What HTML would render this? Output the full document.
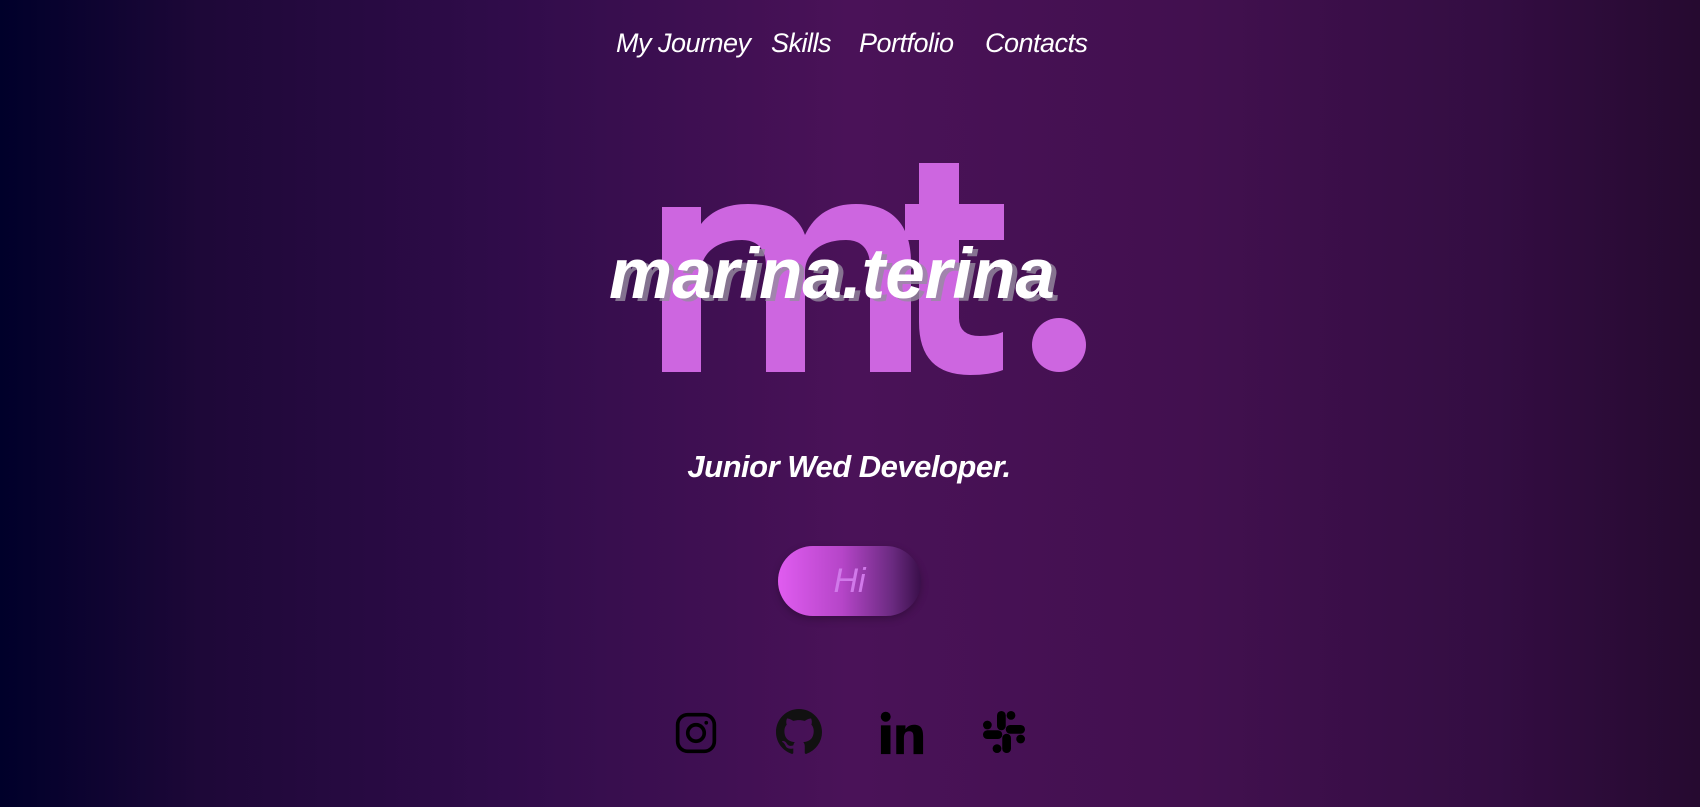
<!DOCTYPE html>
<html><head><meta charset="utf-8"><style>
html,body{margin:0;padding:0}
body{width:1700px;height:807px;overflow:hidden;position:relative;
background:linear-gradient(90deg,#00002a 0%,#1e0838 12%,#300c4a 30%,#4a1258 50%,#42104f 70%,#330d42 88%,#260a30 100%);
font-family:"Liberation Sans",sans-serif;color:#fff}
nav{position:absolute;top:28px;left:0;width:1700px;font-size:27px;font-style:italic;letter-spacing:-0.5px}
nav span{position:absolute;top:0;white-space:nowrap}
.name{position:absolute;left:609px;top:234px;font-size:71px;font-weight:bold;font-style:italic;color:#fff;text-shadow:5px 3px 0 rgba(150,140,160,.8);letter-spacing:0px;white-space:nowrap}
.sub{position:absolute;left:649px;top:449px;width:400px;text-align:center;font-size:31px;font-weight:bold;font-style:italic;letter-spacing:-0.5px;white-space:nowrap}
.btn{position:absolute;left:778px;top:546px;width:143px;height:70px;border-radius:35px;background:linear-gradient(90deg,#e05cf0 0%,#b545c8 45%,#6a2a80 80%,#3a0f4a 100%);box-shadow:0 3px 8px rgba(0,0,0,.25);text-align:center;line-height:70px;font-size:34px;font-style:italic;color:#d179ea}
svg.ic{position:absolute;top:711px}
</style></head><body>
<nav>
<span style="left:616px">My Journey</span>
<span style="left:771px">Skills</span>
<span style="left:859px">Portfolio</span>
<span style="left:985px">Contacts</span>
</nav>
<svg style="position:absolute;left:0;top:0" width="1700" height="807">
<g fill="#cd66e0">
<path d="M662,372 V207 H701 V224 C712,210 728,204 748,204 C785,204 800,220 805,235 C815,214 832,204 856,204 C895,204 911,228 911,262 V372 H870 V266 C870,250 862,240 846,240 C820,240 805,254 805,272 V372 H766 V266 C766,250 758,240 742,240 C716,240 701,254 701,272 V372 Z"/>
<path d="M919,163 H959 V204 H1004 V240 H959 V318 Q959,336 980,336 Q994,336 1003,332 V370 Q990,375 970,375 Q919,375 919,322 V240 H905 V204 H919 Z"/>
<circle cx="1059" cy="345" r="27"/>
</g>
</svg>
<div class="name">marina.terina</div>
<div class="sub">Junior Wed Developer.</div>
<div class="btn">Hi</div>
<svg class="ic" style="left:674px" width="44" height="44" viewBox="0 0 24 24" fill="none" stroke="#000" stroke-width="2"><rect x="2" y="2" width="20" height="20" rx="5.5"/><circle cx="12" cy="12" r="4.5"/><circle cx="17.6" cy="6.4" r="1" fill="#000" stroke="none"/></svg>
<svg class="ic" style="left:776px;top:709px" width="46" height="46" viewBox="0 0 16 16"><path fill="#111" d="M8 0C3.58 0 0 3.580 0 8c0 3.54 2.29 6.53 5.47 7.59.4.07.55-.17.55-.38 0-.19-.01-.82-.01-1.49-2.01.37-2.53-.49-2.69-.94-.09-.23-.48-.94-.82-1.130-.28-.15-.68-.52-.01-.53.63-.01 1.08.58 1.23.82.72 1.21 1.87.87 2.33.66.07-.52.28-.87.51-1.07-1.78-.2-3.64-.89-3.64-3.95 0-.87.31-1.59.82-2.15-.08-.2-.36-1.02.08-2.12 0 0 .67-.21 2.2.82.64-.18 1.32-.27 2-.27.68 0 1.36.09 2 .27 1.53-1.04 2.2-.82 2.2-.82.44 1.1.16 1.92.08 2.12.51.56.82 1.27.82 2.15 0 3.07-1.87 3.75-3.65 3.95.29.25.54.73.54 1.48 0 1.07-.01 1.93-.01 2.2 0 .21.15.46.55.38A8.013 8.013 0 0016 8c0-4.42-3.58-8-8-8z"/></svg>
<svg class="ic" style="left:879px;top:710px" width="46" height="46" viewBox="0 0 24 24" fill="#000"><circle cx="3.5" cy="3.5" r="2.6"/><rect x="1" y="8" width="5" height="15"/><path d="M9 8h4.8v2.1C14.5 8.9 16 7.7 18.3 7.7 22.2 7.7 23 10.3 23 13.6V23h-5v-8.4c0-2-.1-3.5-2.2-3.5-2.1 0-2.8 1.4-2.8 3.5V23H9z"/></svg>
<svg class="ic" style="left:983px" width="42" height="42" viewBox="0 0 24 24" fill="#000">
<rect x="8" y="0" width="5" height="11" rx="2.5"/><rect x="13.5" y="0" width="5" height="5" rx="2.5"/>
<rect x="13" y="8" width="11" height="5" rx="2.5"/><rect x="19" y="13.5" width="5" height="5" rx="2.5"/>
<rect x="11" y="13" width="5" height="11" rx="2.5"/><rect x="5.5" y="19" width="5" height="5" rx="2.5"/>
<rect x="0" y="11" width="11" height="5" rx="2.5"/><rect x="0" y="5.5" width="5" height="5" rx="2.5"/>
</svg>
</body></html>
